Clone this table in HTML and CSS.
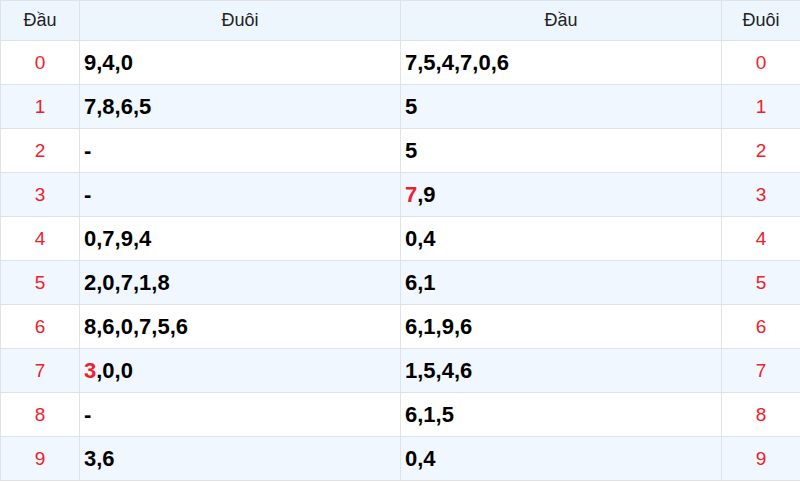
FILE: index.html
```html
<!DOCTYPE html>
<html lang="vi">
<head>
<meta charset="utf-8">
<title>Loto</title>
<link rel="stylesheet" href="styles.css">
</head>
<body>
<table class="loto">
  <thead>
    <tr>
      <th class="c-num">Đầu</th>
      <th class="c-val">Đuôi</th>
      <th class="c-val">Đầu</th>
      <th class="c-num">Đuôi</th>
    </tr>
  </thead>
  <tbody>
    <tr><td class="num">0</td><td class="val">9,4,0</td><td class="val">7,5,4,7,0,6</td><td class="num">0</td></tr>
    <tr><td class="num">1</td><td class="val">7,8,6,5</td><td class="val">5</td><td class="num">1</td></tr>
    <tr><td class="num">2</td><td class="val">-</td><td class="val">5</td><td class="num">2</td></tr>
    <tr><td class="num">3</td><td class="val">-</td><td class="val"><span class="hl">7</span>,9</td><td class="num">3</td></tr>
    <tr><td class="num">4</td><td class="val">0,7,9,4</td><td class="val">0,4</td><td class="num">4</td></tr>
    <tr><td class="num">5</td><td class="val">2,0,7,1,8</td><td class="val">6,1</td><td class="num">5</td></tr>
    <tr><td class="num">6</td><td class="val">8,6,0,7,5,6</td><td class="val">6,1,9,6</td><td class="num">6</td></tr>
    <tr><td class="num">7</td><td class="val"><span class="hl">3</span>,0,0</td><td class="val">1,5,4,6</td><td class="num">7</td></tr>
    <tr><td class="num">8</td><td class="val">-</td><td class="val">6,1,5</td><td class="num">8</td></tr>
    <tr><td class="num">9</td><td class="val">3,6</td><td class="val">0,4</td><td class="num">9</td></tr>
  </tbody>
</table>
</body>
</html>
```

FILE: styles.css
```css
html, body {
  margin: 0;
  padding: 0;
  background: #ffffff;
}

body {
  font-family: "Liberation Sans", Arial, sans-serif;
  color: #000;
}

.loto {
  width: 800px;
  border-collapse: collapse;
  table-layout: fixed;
}

.loto th,
.loto td {
  border: 1px solid #dfe3e8;
  padding: 0 4px;
}

.loto th {
  background: #eef6fd;
  font-weight: 400;
  font-size: 18px;
  height: 39px;
  text-align: center;
  color: #222;
}

.loto td {
  height: 43px;
}

.loto tbody tr:nth-child(even) td {
  background: #f0f7fe;
}

.c-num { width: 70px; }
.c-val { width: 312px; }

.num {
  text-align: center;
  color: #f0202a;
  font-size: 19px;
}

.val {
  text-align: left;
  font-weight: 700;
  font-size: 22px;
  color: #000;
}

.hl {
  color: #f0202a;
}
```
